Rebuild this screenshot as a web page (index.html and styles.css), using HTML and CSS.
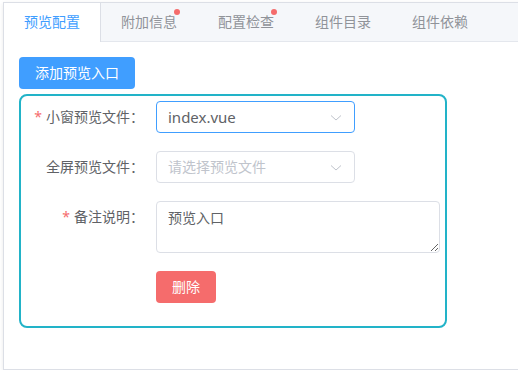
FILE: index.html
```html
<!DOCTYPE html>
<html lang="zh-CN">
  <head>
    <meta charset="utf-8" />
    <title>预览配置</title>
    <link rel="stylesheet" href="styles.css">
  </head>
  <body>
    <div class="tabs-card">
      <div class="tabs-header">
        <div class="tab-item active"><span class="tab-label">预览配置</span></div>
        <div class="tab-item"><span class="tab-label">附加信息<sup class="dot"></sup></span></div>
        <div class="tab-item"><span class="tab-label">配置检查<sup class="dot"></sup></span></div>
        <div class="tab-item"><span class="tab-label">组件目录</span></div>
        <div class="tab-item"><span class="tab-label">组件依赖</span></div>
      </div>

      <div class="tabs-content">
        <button class="btn btn-primary">添加预览入口</button>

        <div class="entry-box">
          <div class="form-item">
            <label class="form-label"><span class="required">*</span>小窗预览文件：</label>
            <div class="select is-focus">
              <span class="select-value">index.vue</span>
              <svg class="select-arrow" width="12" height="8" viewBox="0 0 12 8">
                <path d="M1 1.5 L6 6 L11 1.5" fill="none" stroke="#c0c4cc" stroke-width="1"/>
              </svg>
            </div>
          </div>

          <div class="form-item">
            <label class="form-label">全屏预览文件：</label>
            <div class="select">
              <span class="select-placeholder">请选择预览文件</span>
              <svg class="select-arrow" width="12" height="8" viewBox="0 0 12 8">
                <path d="M1 1.5 L6 6 L11 1.5" fill="none" stroke="#c0c4cc" stroke-width="1"/>
              </svg>
            </div>
          </div>

          <div class="form-item">
            <label class="form-label"><span class="required">*</span>备注说明：</label>
            <textarea class="textarea" rows="2">预览入口</textarea>
          </div>

          <div class="form-item">
            <label class="form-label"></label>
            <button class="btn btn-danger">删除</button>
          </div>
        </div>
      </div>
    </div>
  </body>
</html>
```

FILE: styles.css
```css
* {
  box-sizing: border-box;
}

body {
  margin: 0;
  overflow: hidden;
  background-color: #fff;
  font-family: "Noto Sans", "Noto Sans CJK SC", sans-serif;
  font-size: 14px;
  color: #606266;
}

/* outer tab card, runs past the right edge */
.tabs-card {
  margin: 2px 0 0 3px;
  width: 540px;
  border: 1px solid #dcdfe6;
  background-color: #fff;
  box-shadow: 0 2px 4px rgba(0, 0, 0, 0.06), 0 0 6px rgba(0, 0, 0, 0.03);
}

.tabs-header {
  display: flex;
  height: 39px;
  background-color: #f5f7fa;
  border-bottom: 1px solid #e4e7ed;
}

.tab-item {
  width: 97px;
  height: 39px;
  padding: 0 20px;
  line-height: 38px;
  color: #909399;
  border-right: 1px solid transparent;
}

.tab-item.active {
  color: #409eff;
  background-color: #fff;
  border-right-color: #dcdfe6;
  height: 39px;
}

.tab-label {
  position: relative;
  display: inline-block;
  line-height: 20px;
}

.dot {
  position: absolute;
  top: -3px;
  right: -3px;
  width: 6px;
  height: 6px;
  border-radius: 50%;
  background-color: #f56c6c;
}

.tabs-content {
  padding: 15px;
}

.btn {
  display: block;
  height: 32px;
  padding: 0 16px;
  border: none;
  border-radius: 4px;
  font-family: inherit;
  font-size: 14px;
  line-height: 32px;
  color: #fff;
}

.btn-primary {
  background-color: #409eff;
}

.btn-danger {
  width: 60px;
  background-color: #f56c6c;
}

/* teal bordered entry */
.entry-box {
  width: 428px;
  margin: 5px 0 26px 0;
  padding: 5px;
  border: 2px solid #22b3c8;
  border-radius: 8px;
}

.form-item {
  display: flex;
  align-items: flex-start;
  margin-bottom: 18px;
}

.form-label {
  width: 130px;
  flex-shrink: 0;
  padding-right: 12px;
  text-align: right;
  line-height: 32px;
  color: #606266;
}

.required {
  color: #f56c6c;
  margin-right: 4px;
}

.select {
  position: relative;
  display: flex;
  align-items: center;
  width: 199px;
  height: 32px;
  padding: 0 30px 0 11px;
  border: 1px solid #dcdfe6;
  border-radius: 4px;
  line-height: 30px;
}

.select.is-focus {
  border-color: #409eff;
}

.select-value {
  font-size: 15px;
  color: #606266;
}

.select-placeholder {
  color: #c0c4cc;
}

.select-arrow {
  position: absolute;
  right: 12px;
  top: 12px;
}

.textarea {
  width: 286px;
  height: 52px;
  padding: 5px 11px;
  border: 1px solid #dcdfe6;
  border-radius: 4px;
  font-family: inherit;
  font-size: 14px;
  line-height: 21px;
  color: #606266;
  resize: vertical;
}
```
